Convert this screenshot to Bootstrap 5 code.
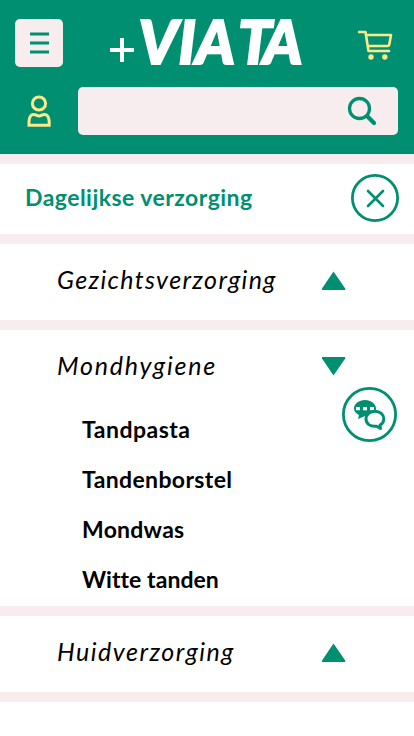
<!DOCTYPE html>
<html lang="nl">
<head>
<meta charset="utf-8">
<meta name="viewport" content="width=device-width, initial-scale=1">
<title>+VIATA</title>
<link href="https://cdn.jsdelivr.net/npm/bootstrap@5.3.0/dist/css/bootstrap.min.css" rel="stylesheet">
<style>
:root{--viata:#009071;--blush:#f7edee;--butter:#fbe98b}
body{font-family:Lato,"Open Sans",sans-serif;color:#000;background:#fff;overflow:hidden}
svg{display:block;flex:none}
.site-head{background:var(--viata);height:154px;padding:19px 16px 0 15px}
.menu-btn{width:48px;height:48px;border-radius:5px;background:var(--blush)}
.logo{margin-right:8px;overflow:visible}
.search-box{width:320px;height:48px;border-radius:5px;background:var(--blush);padding-right:21px}
.user-icon{margin-left:10px}
.panel-row{border-top:10px solid var(--blush);line-height:30px}
.title-row{height:80px;padding:0 15px 2px 25px}
.title-row h1{color:var(--viata);font-size:23px;line-height:30px;font-weight:700;padding-bottom:2px}
.group-head{height:76px;padding:0 68px 2px 57px}
.group-head h2{font-size:25px;line-height:30px;font-style:italic;font-weight:400;padding-bottom:5px}
.group-head svg{margin-bottom:1px}
.open-group{height:286px}
.sub-list{padding-left:82px;font-size:23px;font-weight:700;line-height:50px;margin-top:-2px}
.chat-btn{left:342px;top:387px}
.t-dag{letter-spacing:.46px}.t-gez{letter-spacing:1.35px}.t-mon{letter-spacing:1.8px}.t-hui{letter-spacing:1.5px}
.s1{letter-spacing:.5px}.s2{letter-spacing:.37px}.s3{letter-spacing:.25px}.s4{letter-spacing:.05px}
</style>
<script src="https://cdn.jsdelivr.net/npm/bootstrap@5.3.0/dist/js/bootstrap.bundle.min.js"></script>
</head>
<body>
<header class="site-head">
  <div class="d-flex justify-content-between align-items-start">
    <button class="btn menu-btn border-0 p-0 d-flex align-items-center justify-content-center" aria-label="Menu">
      <svg width="20" height="24" viewBox="0 0 20 24" stroke="#009071" stroke-width="2.8"><path d="M1 3H20M1 12H20M1 21H20"/></svg>
    </button>
    <svg class="logo" width="200" height="56" viewBox="0 0 200 56" role="img" aria-label="+VIATA">
      <path d="M3 31H27M15 19V43" stroke="#fff" stroke-width="4" fill="none"/>
      <text y="45.200" x="31.500 71.500 88.500 131 156" font-family="Lato" font-size="60" font-weight="900" font-style="italic" fill="#fff" stroke="#fff" stroke-width="2">VIATA</text>
    </svg>
    <svg class="mt-2 me-1" width="36" height="36" viewBox="0 0 36 36" fill="none" stroke="#fbe98b" stroke-width="2.6" stroke-linecap="round" stroke-linejoin="round"><path d="M1 5H7.500L10.500 24H31M8.300 8H33L31.300 17.500Q31 19 29.500 19H10"/><circle cx="13" cy="30" r="2.7" fill="#fbe98b" stroke="none"/><circle cx="26.800" cy="30" r="2.7" fill="#fbe98b" stroke="none"/></svg>
  </div>
  <div class="d-flex justify-content-between align-items-center mt-2 pt-1">
    <svg class="user-icon" width="28" height="36" viewBox="0 0 28 36" fill="none" stroke="#fbe98b" stroke-width="3"><circle cx="14" cy="10.500" r="6.600"/><path d="M4 32.200H24.200V28.500Q23.700 22 20 21.500C17.500 21 16.500 23 14 23S10.500 21 8 21.500Q4.500 22 4 28.500Z"/></svg>
    <div class="search-box d-flex align-items-center justify-content-end">
      <svg width="30" height="30" viewBox="0 0 30 30" fill="none" stroke="#009071" stroke-linecap="round"><circle cx="12.5" cy="12.5" r="10" stroke-width="3.3"/><path d="M20.5 20.5L27 27" stroke-width="4.2"/></svg>
    </div>
  </div>
</header>
<main>
  <section class="panel-row title-row d-flex align-items-center justify-content-between">
    <h1 class="mb-0 t-dag">Dagelijkse verzorging</h1>
    <svg width="48" height="48" viewBox="0 0 48 48" fill="none" stroke="#009071" stroke-width="2.8" stroke-linecap="round"><circle cx="24" cy="24" r="22.6"/><path d="M17 17L32 32M32 17L17 32" stroke-width="2.6"/></svg>
  </section>
  <section class="panel-row">
    <div class="group-head d-flex align-items-center justify-content-between">
      <h2 class="mb-0 t-gez">Gezichtsverzorging</h2>
      <svg width="25" height="19" viewBox="0 0 25 19" fill="#009071"><path d="M12.5 .5L24.2 17.5V19H1V17.5Z"/></svg>
    </div>
  </section>
  <section class="panel-row open-group">
    <div class="group-head d-flex align-items-center justify-content-between">
      <h2 class="mb-0 t-mon">Mondhygiene</h2>
      <svg width="25" height="19" viewBox="0 0 25 19" fill="#009071"><path d="M12.5 18.5L24.2 1.5V0H1V1.5Z"/></svg>
    </div>
    <ul class="list-unstyled sub-list mb-0">
      <li class="s1">Tandpasta</li>
      <li class="s2">Tandenborstel</li>
      <li class="s3">Mondwas</li>
      <li class="s4">Witte tanden</li>
    </ul>
  </section>
  <section class="panel-row">
    <div class="group-head d-flex align-items-center justify-content-between">
      <h2 class="mb-0 t-hui">Huidverzorging</h2>
      <svg width="25" height="19" viewBox="0 0 25 19" fill="#009071"><path d="M12.5 .5L24.2 17.5V19H1V17.5Z"/></svg>
    </div>
  </section>
  <div class="panel-row"></div>
</main>
<div class="chat-btn position-absolute">
  <svg width="55" height="55" viewBox="0 0 55 55" fill="none" stroke="#009071" stroke-width="2.8" stroke-linejoin="round"><circle cx="27.5" cy="27.5" r="26.1" fill="#fff"/>
    <path d="M23 13C29 13 34 17 34 21.5C34 26 29 29 23 29L16 32L17 28C14 26.500 12 24.500 12 21.500C12 17 17 13 23 13Z" fill="#009071" stroke="none"/>
    <path d="M14 20H18V23.300H14ZM21 20H25V23.300H21ZM28 20H32V23.300H28Z" fill="#fff" stroke="none"/>
    <path d="M33 24.200C38 24.200 41.800 27.500 41.800 32C41.800 34.500 40.500 36.600 38 38L38.500 41.500L34.500 39.200C28 40 24 36.500 24 32C24 27.500 28 24.200 33 24.200Z" fill="#fff" stroke-width="3"/>
  </svg>
</div>
</body>
</html>
